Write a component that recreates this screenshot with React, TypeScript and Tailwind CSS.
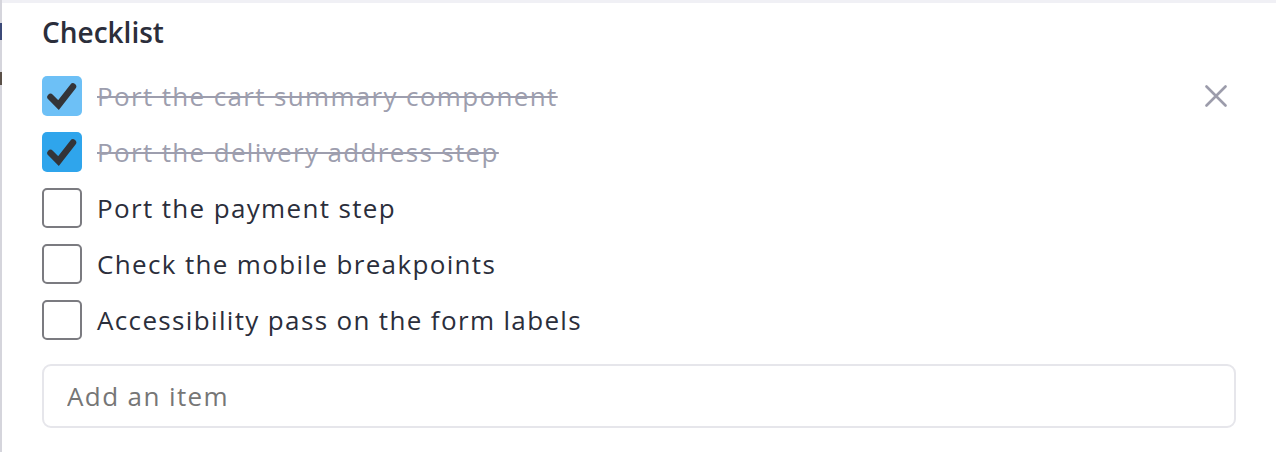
import { useState } from 'react';

interface Item {
  id: number;
  label: string;
  done: boolean;
}

const initialItems: Item[] = [
  { id: 1, label: 'Port the cart summary component', done: true },
  { id: 2, label: 'Port the delivery address step', done: true },
  { id: 3, label: 'Port the payment step', done: false },
  { id: 4, label: 'Check the mobile breakpoints', done: false },
  { id: 5, label: 'Accessibility pass on the form labels', done: false },
];

function CheckBox({ checked, light }: { checked: boolean; light?: boolean }) {
  if (!checked) {
    return <span className="w-10 h-10 shrink-0 rounded-[5px] border-2 border-[#7b7b80] bg-white" />;
  }
  return (
    <span
      className={`w-10 h-10 shrink-0 rounded-[5px] flex items-center justify-center ${
        light ? 'bg-[#6dc0f6]' : 'bg-[#2fa5ec]'
      }`}
    >
      <svg width="40" height="40" viewBox="0 0 40 40" fill="none">
        <polyline
          points="8.5,21 16.5,29 31,10.5"
          stroke="#333438"
          strokeWidth="6.5"
          strokeLinecap="round"
          strokeLinejoin="miter"
        />
      </svg>
    </span>
  );
}

export default function App() {
  const [items, setItems] = useState(initialItems);

  const toggle = (id: number) =>
    setItems((prev) => prev.map((it) => (it.id === id ? { ...it, done: !it.done } : it)));

  return (
    <div className="w-[1276px] h-[452px] flex bg-white overflow-hidden" style={{ fontFamily: '"Open Sans", sans-serif' }}>
      {/* left edge of the panel behind */}
      <div className="w-[2px] shrink-0 bg-[#d5d5dc] flex flex-col">
        <div className="h-[23px]" />
        <div className="h-[17px] bg-[#3c4a78]" />
        <div className="h-[32px]" />
        <div className="h-[13px] bg-[#5a5048]" />
      </div>

      <div className="flex-1 flex flex-col">
        <div className="h-[3px] bg-[#f0f0f5]" />

        <div className="pl-10 pr-10 pt-[13px] flex flex-col">
          <h2 className="h-8 leading-8 text-[28px] font-semibold text-[#2b2e3b] mb-5">Checklist</h2>

          <ul className="flex flex-col">
            {items.map((it, i) => (
              <li key={it.id} className="h-14 flex items-center gap-[15px]">
                <button onClick={() => toggle(it.id)} className="flex">
                  <CheckBox checked={it.done} light={i === 0} />
                </button>
                <span
                  className={`text-[26px] leading-8 tracking-[1.35px] ${
                    it.done
                      ? 'text-[#9d9eae] line-through decoration-2'
                      : 'text-[#2b2e3b]'
                  }`}
                >
                  {it.label}
                </span>
                {i === 0 && (
                  <button className="ml-auto w-10 h-10 flex items-center justify-center text-[#9c9cab]">
                    <svg width="22" height="22" viewBox="0 0 22 22" fill="none">
                      <path d="M1.5 1.5L20.5 20.5M20.5 1.5L1.5 20.5" stroke="currentColor" strokeWidth="2.6" strokeLinecap="round" />
                    </svg>
                  </button>
                )}
              </li>
            ))}
          </ul>

          <input
            placeholder="Add an item"
            className="mt-4 h-16 w-full rounded-[9px] border-2 border-[#e6e6eb] pl-[23px] text-[26px] tracking-[1.4px] text-[#2b2e3b] placeholder:text-[#767676] outline-none"
          />
        </div>
      </div>
    </div>
  );
}
